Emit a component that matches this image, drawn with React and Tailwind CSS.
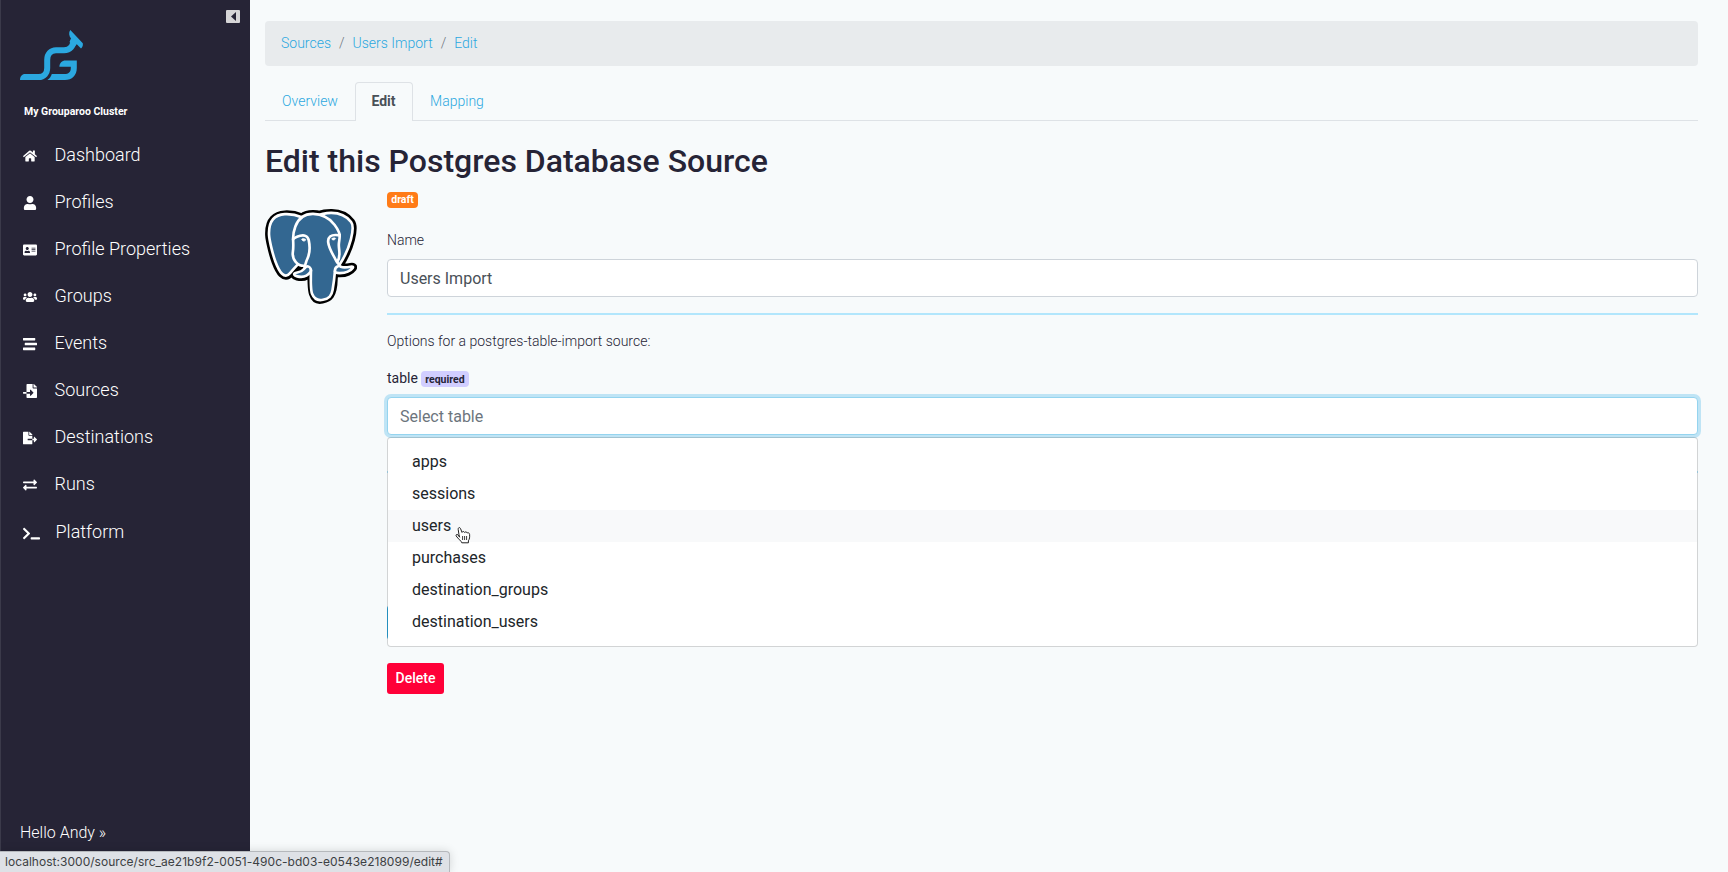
import React from "react";
import {
  FaHome,
  FaUser,
  FaAddressCard,
  FaUsers,
  FaStream,
  FaFileImport,
  FaFileExport,
  FaExchangeAlt,
  FaTerminal,
} from "react-icons/fa";

const NAV = [
  { label: "Dashboard", icon: FaHome },
  { label: "Profiles", icon: FaUser },
  { label: "Profile Properties", icon: FaAddressCard },
  { label: "Groups", icon: FaUsers },
  { label: "Events", icon: FaStream },
  { label: "Sources", icon: FaFileImport },
  { label: "Destinations", icon: FaFileExport },
  { label: "Runs", icon: FaExchangeAlt },
];

const TABLES = ["apps", "sessions", "users", "purchases", "destination_groups", "destination_users"];

function Logo() {
  return (
    <svg className="block h-[50px] w-[64px]" viewBox="20 30 64 50" fill="none">
      <path d="M37 77H38.5C44 77 47.2 73 47.2 68V60C47.2 54 51 50.3 56 50.3H64C70 50.3 73.6 46 74 39" stroke="#2ba8e0" strokeWidth="6" />
      <path d="M20 80C20 76.5 22 74 25 74H38V80Z" fill="#2ba8e0" />
      <path d="M70.3 30L82.8 43.2C83.2 45.5 82.4 47.4 81 48.6L76.8 44.2L74 47L69.5 42L71 38.5C69 36 68.4 32.5 70.3 30Z" fill="#2ba8e0" />
      <path d="M59.4 66.8C59.4 63 62 60.4 65.5 60.4H76.8V68C76.8 75.5 72 80 65 80H47.4C49.6 78.5 51 76.5 51.8 74H64.5C68.5 74 70.8 72 70.8 68V66.8Z" fill="#2ba8e0" />
    </svg>
  );
}

function PostgresLogo() {
  return (
    <svg className="block h-[95px] w-[92px]" viewBox="0 0 432.071 445.383">
      <path
        fill="#000"
        stroke="#000"
        strokeWidth="37.395"
        d="M323.205,324.227c2.833-23.601,1.984-27.062,19.563-23.239l4.463,0.392c13.517,0.615,31.199-2.174,41.587-7c22.362-10.376,35.622-27.7,13.572-23.148c-50.297,10.376-53.755-6.655-53.755-6.655c53.111-78.803,75.313-178.836,56.149-203.322C352.514-5.534,262.036,26.049,260.522,26.869l-0.482,0.089c-9.938-2.062-21.06-3.294-33.554-3.496c-22.761-0.374-40.032,5.967-53.133,15.904c0,0-161.408-66.498-153.899,83.628c1.597,31.936,45.777,241.655,98.47,178.31c19.259-23.163,37.871-42.748,37.871-42.748c9.242,6.14,20.307,9.272,31.912,8.147l0.897-0.765c-0.281,2.876-0.157,5.689,0.359,9.019c-13.572,15.167-9.584,17.83-36.723,23.416c-27.457,5.659-11.326,15.734-0.797,18.367c12.768,3.193,42.305,7.716,62.268-20.224l-0.795,3.188c5.325,4.26,4.965,30.619,5.72,49.452c0.756,18.834,2.017,36.409,5.856,46.771c3.839,10.36,8.369,37.05,44.036,29.406c29.809-6.388,52.6-15.582,54.677-101.107"
      />
      <path
        fill="#336791"
        d="M402.395,271.23c-50.302,10.376-53.76-6.655-53.76-6.655c53.111-78.808,75.313-178.843,56.153-203.326c-52.27-66.785-142.752-35.2-144.262-34.38l-0.486,0.087c-9.938-2.063-21.06-3.292-33.56-3.496c-22.761-0.373-40.026,5.967-53.127,15.902c0,0-161.411-66.495-153.904,83.63c1.597,31.938,45.776,241.657,98.471,178.312c19.26-23.163,37.869-42.748,37.869-42.748c9.243,6.14,20.308,9.272,31.908,8.147l0.901-0.765c-0.28,2.876-0.152,5.689,0.361,9.019c-13.575,15.167-9.586,17.83-36.723,23.416c-27.459,5.659-11.328,15.734-0.796,18.367c12.768,3.193,42.307,7.716,62.266-20.224l-0.796,3.188c5.319,4.26,9.054,27.711,8.428,48.969c-0.626,21.259-1.044,35.854,3.147,47.254c4.191,11.4,8.368,37.05,44.042,29.406c29.809-6.388,45.256-22.942,47.405-50.555c1.525-19.631,4.976-16.729,5.194-34.28l2.768-8.309c3.192-26.611,0.507-35.196,18.872-31.203l4.463,0.392c13.517,0.615,31.208-2.174,41.591-7c22.358-10.376,35.618-27.7,13.573-23.148z"
      />
      <g fill="none" stroke="#fff" strokeWidth="12.465" strokeLinecap="round" strokeLinejoin="round">
        <path d="M215.866,286.484c-1.385,49.516,0.348,99.377,5.193,111.495c4.848,12.118,15.223,35.688,50.9,28.045c29.806-6.39,40.651-18.756,45.357-46.051c3.466-20.082,10.148-75.854,11.005-87.281" />
        <path d="M173.104,38.256c0,0-161.521-66.016-154.012,84.109c1.597,31.938,45.779,241.664,98.473,178.316c19.256-23.166,36.671-41.335,36.671-41.335" />
        <path d="M260.349,26.207c-5.591,1.753,89.848-34.889,144.087,34.417c19.159,24.484-3.043,124.519-56.153,203.329" />
        <path d="M348.282,263.953c0,0,3.461,17.036,53.764,6.653c22.04-4.552,8.776,12.774-13.577,23.155c-18.345,8.514-59.474,10.696-60.146-1.069c-1.729-30.355,21.647-21.133,19.96-28.739c-1.525-6.85-11.979-13.573-18.894-30.338c-6.037-14.633-82.796-126.849,21.287-110.183c3.813-0.789-27.146-99.002-124.553-100.599c-97.385-1.597-94.19,119.762-94.19,119.762" />
        <path d="M188.604,274.334c-13.577,15.166-9.584,17.829-36.723,23.417c-27.459,5.66-11.326,15.733-0.797,18.365c12.768,3.195,42.307,7.718,62.266-20.229c6.078-8.509-0.036-22.086-8.385-25.547c-4.034-1.671-9.428-3.765-16.361,3.994z" />
        <path d="M187.715,274.069c-1.368-8.917,2.93-19.528,7.536-31.942c6.922-18.626,22.893-37.255,10.117-96.339c-9.523-44.029-73.396-9.163-73.436-3.193c-0.039,5.968,2.889,30.26-1.067,58.548c-5.162,36.913,23.488,68.132,56.479,64.938" />
        <path d="M350.676,123.432c0.863,15.994-3.445,26.888-3.988,43.914c-0.804,24.748,11.799,53.074-7.191,81.435" />
      </g>
      <path fill="#fff" stroke="#fff" strokeWidth="4.155" d="M172.517,141.7c-0.288,2.039,3.733,7.48,8.976,8.207c5.234,0.73,9.714-3.522,9.998-5.559c0.284-2.039-3.732-4.285-8.977-5.015c-5.237-0.731-9.719,0.333-9.996,2.367z" />
      <path fill="#fff" stroke="#fff" strokeWidth="2.078" d="M331.941,137.543c0.284,2.039-3.732,7.48-8.976,8.207c-5.238,0.73-9.718-3.522-10.005-5.559c-0.277-2.039,3.74-4.285,8.979-5.015c5.239-0.73,9.718,0.333,10.002,2.368z" />
    </svg>
  );
}

function HandCursor() {
  return (
    <svg className="pointer-events-none absolute left-[455px] top-[526px] z-20 h-[18px] w-[16px]" viewBox="0 0 16 18">
      <path
        d="M4.6 11.2L3.9 8.2L3.2 3.4C2.9 1.6 4.9 .9 5.5 2.5L7 6.4C7.4 5.2 9.2 5.2 9.6 6.5C10.2 5.6 11.8 5.7 12.2 7C13 6.4 14.5 6.8 14.6 8.4C14.8 11 14.6 13 13.4 14.8V16.8H6.8C6.4 15 3.2 13 1.2 10C.5 8.8 1.8 7.9 2.9 8.8Z"
        fill="#fff"
        stroke="#222"
        strokeWidth="1"
        strokeLinejoin="round"
      />
      <path d="M7.6 10V14M9.6 10V14M11.6 10V14" stroke="#222" strokeWidth=".9" />
    </svg>
  );
}

function Sidebar() {
  return (
    <aside className="relative flex h-full w-[250px] shrink-0 flex-col border-l border-[#3b3a4a] bg-[#262436] text-white">
      <button className="absolute right-[10px] top-[10px] flex h-[13px] w-[14px] items-center justify-center rounded-[1px] bg-[#d6d5d7]">
        <svg className="h-[9px] w-[5px]" viewBox="0 0 5 9"><path d="M5 0V9L0 4.5Z" fill="#262436" /></svg>
      </button>
      <div className="pl-[19px] pt-[30px]"><Logo /></div>
      <div className="mt-6 pl-[23px] text-[10.5px] font-bold leading-4">My Grouparoo Cluster</div>
      <nav className="mt-[11px] flex flex-col">
        {NAV.map(({ label, icon: Icon }) => (
          <a key={label} className="flex h-[47px] items-center text-[18px] font-[350]">
            <span className="ml-[18px] flex w-[22px] justify-center pt-[3px]"><Icon size={14} /></span>
            <span className="ml-[13.5px]">{label}</span>
          </a>
        ))}
        <a className="mt-px flex h-[47px] items-center text-[18px] font-[350]">
          <span className="ml-[19px] flex w-[22px] justify-center pt-[3px]"><FaTerminal size={17} /></span>
          <span className="ml-[13.5px]">Platform</span>
        </a>
      </nav>
      <div className="mt-auto pb-[27px] pl-[19px] text-base font-[350] leading-6">Hello Andy »</div>
    </aside>
  );
}

export default function App() {
  return (
    <div className="relative flex h-[872px] w-[1728px] overflow-hidden bg-[#f7fafb] font-[Roboto,sans-serif] text-[#262436]">
      <Sidebar />
      <main className="flex flex-1 flex-col pl-[15px] pr-[30px] pt-[21px]">
        <nav className="flex h-[45px] items-center gap-2 rounded bg-[#e8ebed] px-4 pb-0.5 text-sm font-[350] text-[#2ba8e0]">
          <a>Sources</a>
          <span className="text-[#6c757d]">/</span>
          <a>Users Import</a>
          <span className="text-[#6c757d]">/</span>
          <a>Edit</a>
        </nav>
        <div className="mt-4 flex h-[39px] border-b border-[#dee2e6] text-sm font-[350] text-[#2ba8e0]">
          <a className="flex h-[38px] w-[90px] items-center justify-center">Overview</a>
          <a className="-ml-px mr-px flex h-[39px] w-[58px] translate-x-px items-center justify-center rounded-t border border-b-0 border-[#dee2e6] bg-[#f7fafb] pb-0.5 pr-px font-bold text-[#495057]">Edit</a>
          <a className="flex h-[38px] w-[88px] items-center justify-center">Mapping</a>
        </div>
        <h1 className="mt-[20px] text-[32px] font-medium leading-10">Edit this Postgres Database Source</h1>
        <div className="mt-[11px] flex">
          <div className="w-[122px] shrink-0 pt-[17px]"><PostgresLogo /></div>
          <div className="flex flex-1 flex-col">
            <span className="flex h-4 w-[31px] items-center justify-center rounded bg-[#ff7b17] text-[10.5px] font-bold text-white">draft</span>
            <label className="mt-[22px] text-sm font-[350] leading-[21px]">Name</label>
            <div className="mt-2 flex h-[38px] items-center rounded border border-[#ced4da] bg-white px-3 pt-0.5 text-base text-[#495057]">Users Import</div>
            <hr className="mt-4 border-t-2 border-[#b2e6fc]" />
            <p className="mt-4 text-sm font-[350] leading-[21px]">Options for a postgres-table-import source:</p>
            <div className="mt-[15px] flex h-[21px] items-center text-sm">
              table
              <span className="ml-[3px] mt-[3px] flex h-4 w-12 items-center justify-center rounded bg-[#d1ceff] text-[10.5px] font-bold">required</span>
            </div>
            <div className="relative mt-[9px] h-[38px]">
              <div className="flex h-[38px] items-center rounded border border-[#95d4ef] bg-white px-3 pt-0.5 text-base text-[#6c757d] shadow-[0_0_0_3px_#bfe4f5]">Select table</div>
              <ul className="absolute left-0 right-0 top-10 z-10 rounded border border-black/15 bg-white bg-clip-padding py-2 text-base text-[#212529]">
                {TABLES.map((t) => (
                  <li key={t} className={t === "users" ? "h-8 bg-[#f8f9fa] px-6 leading-8" : "h-8 px-6 leading-8"}>{t}</li>
                ))}
              </ul>
            </div>
            <hr className="mt-9 border-t-2 border-[#b2e6fc]" />
            <div className="mt-[132px] h-[35px] w-20 rounded bg-[#2ba8e0]" />
            <button className="mt-[23px] h-[31px] w-[57px] rounded-[3px] bg-[#ff0038] pb-0.5 text-sm font-medium text-white">Delete</button>
          </div>
        </div>
      </main>
      <HandCursor />
      <div className="absolute bottom-0 left-0 flex h-[21px] w-[450px] items-center rounded-tr border-r border-t border-[#b5b8bc] bg-[#dee1e6] pl-[5px] font-[Inter,sans-serif] text-[12px] tracking-[0.03px] text-[#3c4043] shadow-[0_0_10px_rgba(0,0,0,0.15)]">
        localhost:3000/source/src_ae21b9f2-0051-490c-bd03-e0543e218099/edit#
      </div>
    </div>
  );
}
